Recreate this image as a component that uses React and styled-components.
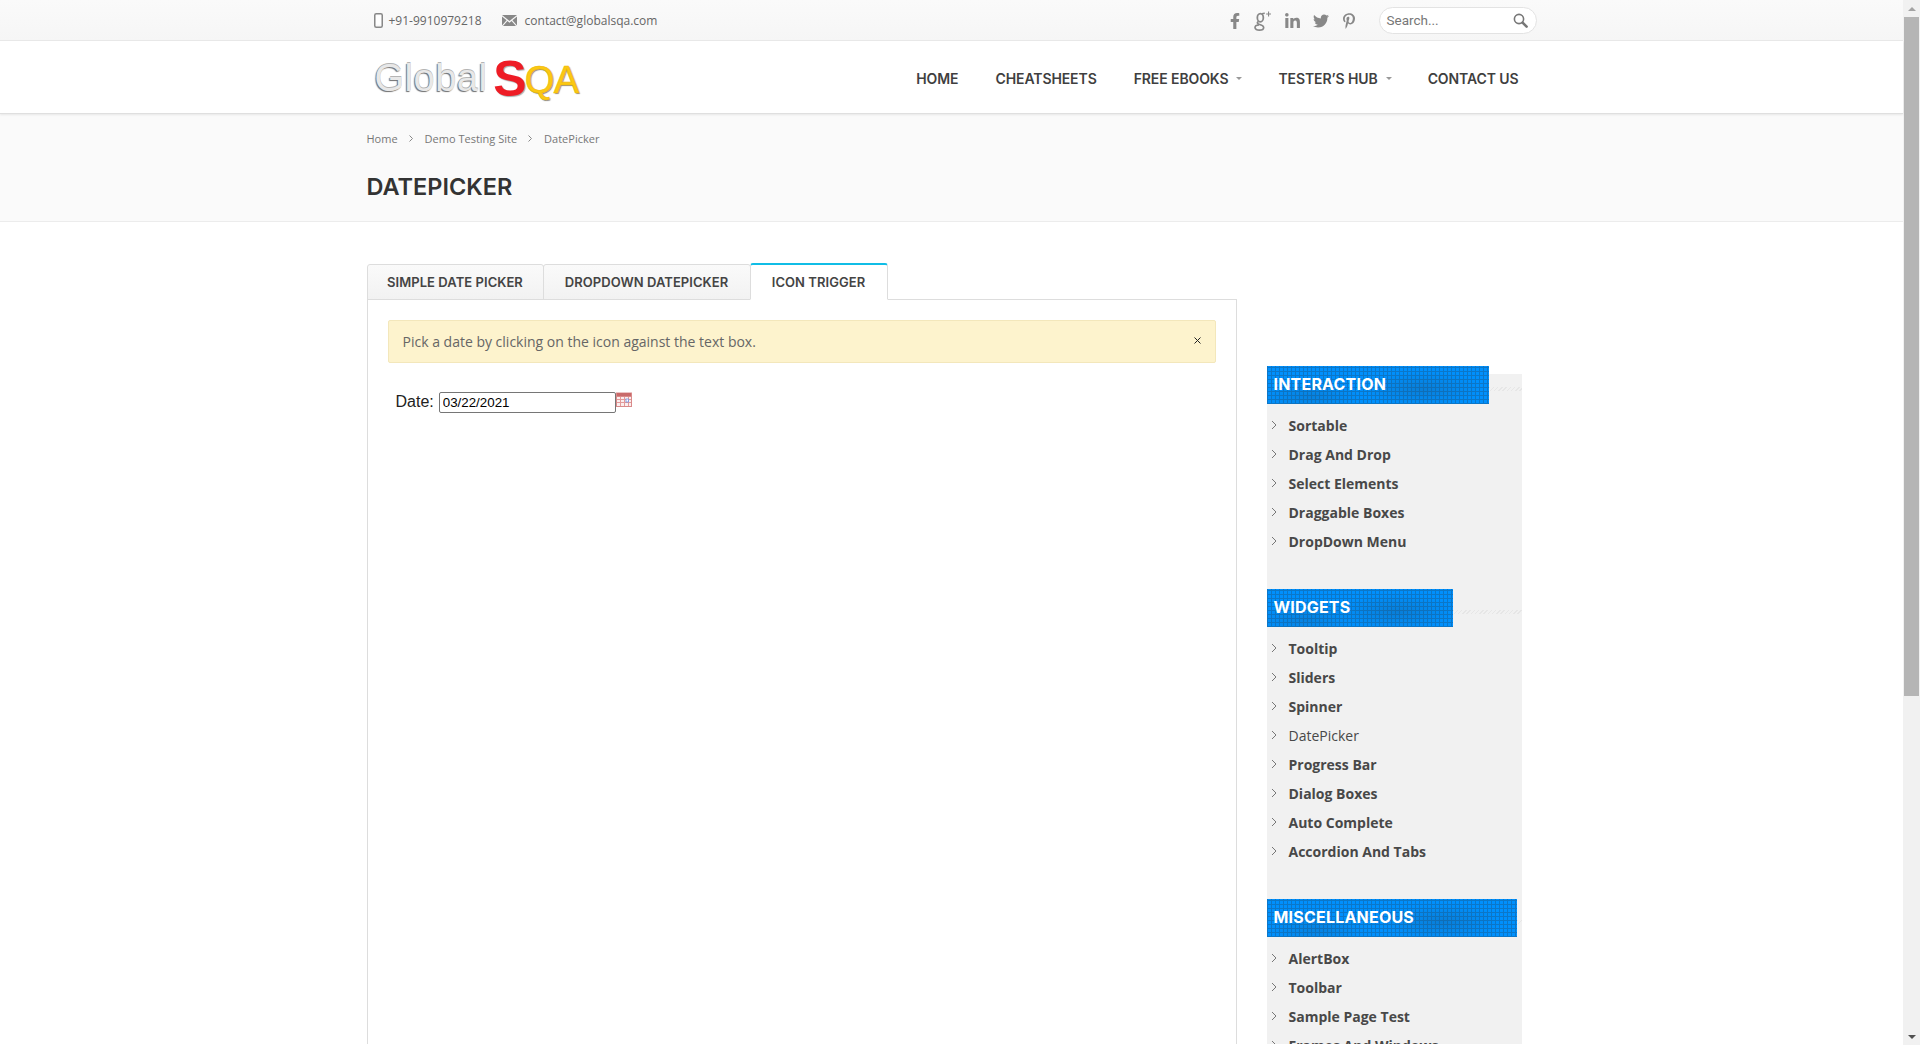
import React from 'react';
import styled, { createGlobalStyle } from 'styled-components';
import { FaFacebookF, FaLinkedinIn, FaTwitter, FaPinterestP } from 'react-icons/fa';

const GlobalStyle = createGlobalStyle`
  html, body {
    margin: 0;
    height: 100%;
    overflow: hidden;
    background: #fff;
    font-family: "Open Sans", sans-serif;
  }
`;

const Screen = styled.div`
  display: flex;
  height: 1045px;
  overflow: hidden;
`;

const Page = styled.div`
  flex: 1;
  min-width: 0;
`;

const Scrollbar = styled.div`
  width: 17px;
  background: #f1f1f1;
  display: flex;
  flex-direction: column;
  align-items: center;
`;

const ScrollArrow = styled.div`
  height: 17px;
  flex: none;
  display: flex;
  align-items: center;
  justify-content: center;
  &::before {
    content: '';
    border-left: 4px solid transparent;
    border-right: 4px solid transparent;
    ${(p) => (p.$down ? 'border-top: 4px solid #505050;' : 'border-bottom: 4px solid #a3a3a3;')}
  }
`;

const ScrollThumb = styled.div`
  width: 100%;
  box-sizing: border-box;
  border: 0 solid #f1f1f1;
  border-width: 0 1px;
  height: 679px;
  background: #b5b5b5;
  background-clip: padding-box;
`;

const ScrollTrack = styled.div`
  flex: 1;
`;

const Container = styled.div`
  width: 1170px;
  margin: 0 auto;
`;

const TopBar = styled.div`
  height: 40px;
  background: linear-gradient(#fafafa, #f6f6f6);
  border-bottom: 1px solid #e9e9e9;
`;

const TopRow = styled(Container)`
  display: flex;
  align-items: center;
  height: 40px;
  box-sizing: border-box;
  padding-left: 7px;
`;

const Contact = styled.div`
  display: flex;
  align-items: center;
  font-size: 12px;
  color: #666;
  margin-right: ${(p) => p.$gap || 0}px;
  svg {
    margin-right: ${(p) => p.$iconGap}px;
  }
`;

const Socials = styled.div`
  display: flex;
  align-items: center;
  margin-left: auto;
  margin-right: 22px;
  margin-top: 2px;
  color: #888;
  gap: 12px;
`;

const GooglePlusSvg = styled.svg`
  margin-left: -1px;
`;

const SearchBox = styled.div`
  width: 158px;
  height: 27px;
  box-sizing: border-box;
  border: 1px solid #e3e3e3;
  border-radius: 14px;
  background: #fff;
  display: flex;
  align-items: center;
  justify-content: space-between;
  padding: 0 8px 0 7px;
  font-family: "Roboto", sans-serif;
  font-size: 13.5px;
  color: #777;
`;

const Header = styled.div`
  height: 72px;
  background: #fff;
  border-bottom: 1px solid #dfdfdf;
  box-shadow: 0 1px 2px rgba(0, 0, 0, 0.08);
  position: relative;
`;

const HeaderRow = styled(Container)`
  display: flex;
  align-items: center;
  justify-content: space-between;
  height: 72px;
  padding-right: 18px;
  box-sizing: border-box;
`;

const Logo = styled.div`
  display: flex;
  align-items: baseline;
  margin-left: 8px;
  margin-top: -2px;
  font-family: "Liberation Sans", sans-serif;
  font-size: 38px;
  line-height: 48px;
`;

const LogoGlobal = styled.span`
  color: #e8e8e8;
  font-weight: 400;
  letter-spacing: 0.5px;
  text-shadow: -1px 1px 1px #6e6e6e, 0 -1px 0 #b5b5b5;
`;

const LogoS = styled.span`
  color: #ee1c25;
  font-weight: 700;
  font-size: 50px;
  line-height: 48px;
  margin: 0 -2px 0 6px;
  transform: translateY(5px);
  text-shadow: 1px 1px 1px #aaa;
`;

const LogoQA = styled.span`
  color: #fbc813;
  font-size: 38px;
  letter-spacing: -0.5px;
  transform: translateY(2px);
  -webkit-text-stroke: 0.6px #f0b800;
  text-shadow: 1px 1px 1px #888;
`;

const Nav = styled.nav`
  display: flex;
  align-items: center;
  gap: 37px;
  margin-top: 3px;
`;

const NavItem = styled.div`
  display: flex;
  align-items: center;
  font-family: "Inter", sans-serif;
  font-size: 14px;
  font-weight: 600;
  color: #3f3f3f;
  letter-spacing: -0.1px;
  white-space: nowrap;
`;

const Caret = styled.span`
  width: 0;
  height: 0;
  margin-left: 8px;
  margin-right: -1px;
  border-left: 3px solid transparent;
  border-right: 3px solid transparent;
  border-top: 3px solid #999;
`;

const TitleBand = styled.div`
  height: 107px;
  background: #fafafa;
  border-bottom: 1px solid #ececec;
`;

const Crumbs = styled.div`
  display: flex;
  align-items: center;
  height: 17px;
  padding-top: 16px;
  font-size: 11px;
  color: #777;
`;

const CrumbArrow = styled.svg`
  margin: 0 12px 0 11px;
`;

const PageTitle = styled.h1`
  margin: 24px 0 0;
  font-family: "Inter", sans-serif;
  font-size: 23.5px;
  line-height: 32px;
  font-weight: 600;
  color: #333;
`;

const Body = styled(Container)`
  display: flex;
  align-items: flex-start;
  gap: 30px;
  height: 822px;
  overflow: hidden;
`;

const Main = styled.div`
  width: 870px;
  flex: none;
  margin-top: 41px;
`;

const Tabs = styled.div`
  display: flex;
  align-items: flex-end;
  height: 37px;
  position: relative;
  z-index: 1;
`;

const Tab = styled.div`
  box-sizing: border-box;
  width: ${(p) => p.$w}px;
  display: flex;
  align-items: center;
  justify-content: center;
  font-family: "Inter", sans-serif;
  font-size: 13px;
  font-weight: 600;
  letter-spacing: 0.05px;
  color: #444;
  border: 1px solid #ddd;
  border-radius: 3px 3px 0 0;
  margin-right: -1px;
  height: ${(p) => (p.$active ? 37 : 36)}px;
  background: ${(p) => (p.$active ? '#fff' : 'linear-gradient(#fafafa, #f2f2f2)')};
  ${(p) => (p.$active ? 'border-top: 2px solid #10bde6; border-bottom: 1px solid #fff;' : '')}
`;

const Panel = styled.div`
  border: 1px solid #ddd;
  height: 800px;
  margin-top: -1px;
  padding: 20px 20px 0 20px;
  box-sizing: border-box;
`;

const Alert = styled.div`
  height: 43px;
  box-sizing: border-box;
  display: flex;
  align-items: center;
  justify-content: space-between;
  padding: 0 14px 0 14px;
  background: #fdf3cd;
  border: 1px solid #f3e7bb;
  border-radius: 2px;
  font-size: 14px;
  color: #666;
  svg {
    margin-top: -2px;
  }
`;

const DateRow = styled.div`
  display: flex;
  align-items: flex-start;
  margin: 29px 0 0 8px;
  font-family: "Liberation Sans", sans-serif;
  font-size: 16px;
  color: #222;
`;

const DateLabel = styled.label`
  line-height: 20px;
  margin-right: 5px;
`;

const DateInput = styled.input`
  width: 177px;
  height: 21px;
  box-sizing: border-box;
  padding: 1px 3px;
  border: 1px solid #767676;
  border-radius: 2px;
  font-family: "Liberation Sans", sans-serif;
  font-size: 13.33px;
  color: #000;
  outline: none;
`;

const Sidebar = styled.aside`
  width: 255px;
  flex: none;
  margin-top: 152px;
  background: #f1f1f1;
  height: 800px;
`;

const SectionHead = styled.div`
  display: flex;
  align-items: center;
  margin-top: ${(p) => (p.$first ? -8 : 33)}px;
`;

const Banner = styled.h3`
  margin: 0;
  flex: none;
  box-sizing: border-box;
  width: ${(p) => p.$w}px;
  height: 38px;
  padding-left: 7px;
  line-height: 37px;
  font-family: "Inter", sans-serif;
  font-size: 16px;
  font-weight: 700;
  letter-spacing: 0.2px;
  color: #fff;
  background-color: #0090fd;
  background-image:
    radial-gradient(ellipse 60px 18px at 70% 60%, rgba(30, 80, 120, 0.28), transparent),
    radial-gradient(ellipse 50px 14px at 20% 80%, rgba(30, 80, 120, 0.22), transparent),
    repeating-linear-gradient(0deg, #0b77c9 0 1px, transparent 1px 4px),
    repeating-linear-gradient(90deg, #0b77c9 0 1px, transparent 1px 4px);
`;

const Hatch = styled.div`
  flex: 1;
  height: 4px;
  margin-top: 8px;
  background: repeating-linear-gradient(135deg, #e6e6e6 0 1px, #f1f1f1 1px 3px);
`;

const LinkList = styled.ul`
  list-style: none;
  margin: 7px 0 0;
  padding: 0;
`;

const LinkRow = styled.li`
  display: flex;
  align-items: center;
  height: 29px;
  font-size: 14px;
  font-weight: ${(p) => (p.$current ? 400 : 700)};
  color: #484848;
  svg {
    margin: -2px 12px 0 4px;
    flex: none;
  }
`;

const Chevron = () => (
  <svg width="6" height="10" viewBox="0 0 6 10" fill="none">
    <path d="M1 1l4 4-4 4" stroke="#777" strokeWidth="1" />
  </svg>
);

const PhoneIcon = () => (
  <svg width="9" height="15" viewBox="0 0 9 15" fill="none">
    <rect x="0.75" y="0.75" width="7.5" height="13.5" rx="1.5" stroke="#888" strokeWidth="1.5" />
    <rect x="2" y="2.5" width="5" height="9" fill="#fff" />
  </svg>
);

const MailIcon = () => (
  <svg width="15" height="11" viewBox="0 0 15 11">
    <path d="M0 0h15L7.5 6z" fill="#888" />
    <path d="M0 1.5v9l4.6-5.2zM15 1.5v9l-4.6-5.2zM1 11h13L9.6 6 7.5 7.8 5.4 6z" fill="#888" />
  </svg>
);

const GooglePlusIcon = () => (
  <GooglePlusSvg width="18" height="20" viewBox="0 0 16 18" fill="none" stroke="#888">
    <ellipse cx="5.6" cy="6" rx="2.7" ry="3.7" strokeWidth="1.6" />
    <path d="M4 9.5c-2 1-1 2 1 2.6 2.4.7 3.6 1.3 3.6 2.7 0 1.5-1.7 2.4-3.9 2.4-2.2 0-3.9-.9-3.9-2.3 0-1.3 1.6-2.3 3.6-2.3" strokeWidth="1.5" />
    <path d="M7 2.6c.8-.5 1.6-.6 2.6-.6" strokeWidth="1.4" />
    <path d="M13 0.5v4.5M10.8 2.7h4.4" strokeWidth="1" />
  </GooglePlusSvg>
);

const SearchIcon = () => (
  <svg width="15" height="15" viewBox="0 0 15 15" fill="none">
    <circle cx="6" cy="6" r="4.6" stroke="#777" strokeWidth="1.6" />
    <path d="M9.6 9.6l4 4" stroke="#777" strokeWidth="2.6" strokeLinecap="round" />
  </svg>
);

const CloseIcon = () => (
  <svg width="7" height="7" viewBox="0 0 7 7" fill="none">
    <path d="M0.5 0.5l6 6M6.5 0.5l-6 6" stroke="#222" strokeWidth="1" />
  </svg>
);

const CalendarIcon = () => (
  <svg width="16" height="15" viewBox="0 0 16 15">
    <rect x="0" y="0" width="16" height="15" fill="#d98a8a" />
    <rect x="1" y="1" width="14" height="3" fill="#c96a6a" />
    <path d="M1 0v1M3 0v1M5 0v1M7 0v1M9 0v1M11 0v1M13 0v1M15 0v1" stroke="#fff" strokeWidth="1" />
    <rect x="1" y="5" width="14" height="9" fill="#fbeeee" />
    <path d="M4.5 5v9M8.5 5v9M12.5 5v9M1 7.5h14M1 10.5h14" stroke="#e39a9a" strokeWidth="1" />
    <rect x="10" y="7" width="2.5" height="3" fill="#fff" stroke="#6f8fe0" strokeWidth="0.8" />
  </svg>
);

const sections = [
  {
    title: 'INTERACTION',
    width: 222,
    links: ['Sortable', 'Drag And Drop', 'Select Elements', 'Draggable Boxes', 'DropDown Menu'],
  },
  {
    title: 'WIDGETS',
    width: 186,
    links: ['Tooltip', 'Sliders', 'Spinner', 'DatePicker', 'Progress Bar', 'Dialog Boxes', 'Auto Complete', 'Accordion And Tabs'],
  },
  {
    title: 'MISCELLANEOUS',
    width: 250,
    links: ['AlertBox', 'Toolbar', 'Sample Page Test', 'Frames And Windows'],
  },
];

const App = () => (
  <Screen>
    <GlobalStyle />
    <Page>
      <TopBar>
        <TopRow>
          <Contact $gap={20} $iconGap={6}>
            <PhoneIcon />
            +91-9910979218
          </Contact>
          <Contact $iconGap={8}>
            <MailIcon />
            contact@globalsqa.com
          </Contact>
          <Socials>
            <FaFacebookF size={16} />
            <GooglePlusIcon />
            <FaLinkedinIn size={17} />
            <FaTwitter size={16} />
            <FaPinterestP size={16} />
          </Socials>
          <SearchBox>
            Search...
            <SearchIcon />
          </SearchBox>
        </TopRow>
      </TopBar>

      <Header>
        <HeaderRow>
          <Logo>
            <LogoGlobal>Global</LogoGlobal>
            <LogoS>S</LogoS>
            <LogoQA>QA</LogoQA>
          </Logo>
          <Nav>
            <NavItem>HOME</NavItem>
            <NavItem>CHEATSHEETS</NavItem>
            <NavItem>FREE EBOOKS<Caret /></NavItem>
            <NavItem>TESTER’S HUB<Caret /></NavItem>
            <NavItem>CONTACT US</NavItem>
          </Nav>
        </HeaderRow>
      </Header>

      <TitleBand>
        <Container>
          <Crumbs>
            Home
            <CrumbArrow width="4" height="7" viewBox="0 0 4 7" fill="none">
              <path d="M0.5 0.5l3 3-3 3" stroke="#888" />
            </CrumbArrow>
            Demo Testing Site
            <CrumbArrow width="4" height="7" viewBox="0 0 4 7" fill="none">
              <path d="M0.5 0.5l3 3-3 3" stroke="#888" />
            </CrumbArrow>
            DatePicker
          </Crumbs>
          <PageTitle>DATEPICKER</PageTitle>
        </Container>
      </TitleBand>

      <Body>
        <Main>
          <Tabs>
            <Tab $w={177}>SIMPLE DATE PICKER</Tab>
            <Tab $w={208}>DROPDOWN DATEPICKER</Tab>
            <Tab $w={138} $active>ICON TRIGGER</Tab>
          </Tabs>
          <Panel>
            <Alert>
              Pick a date by clicking on the icon against the text box.
              <CloseIcon />
            </Alert>
            <DateRow>
              <DateLabel>Date:</DateLabel>
              <DateInput defaultValue="03/22/2021" readOnly />
              <CalendarIcon />
            </DateRow>
          </Panel>
        </Main>

        <Sidebar>
          {sections.map((section, index) => (
            <React.Fragment key={section.title}>
              <SectionHead $first={index === 0}>
                <Banner $w={section.width}>{section.title}</Banner>
                <Hatch />
              </SectionHead>
              <LinkList>
                {section.links.map((link) => (
                  <LinkRow key={link} $current={link === 'DatePicker'}>
                    <Chevron />
                    {link}
                  </LinkRow>
                ))}
              </LinkList>
            </React.Fragment>
          ))}
        </Sidebar>
      </Body>
    </Page>

    <Scrollbar>
      <ScrollArrow />
      <ScrollThumb />
      <ScrollTrack />
      <ScrollArrow $down />
    </Scrollbar>
  </Screen>
);

export default App;
